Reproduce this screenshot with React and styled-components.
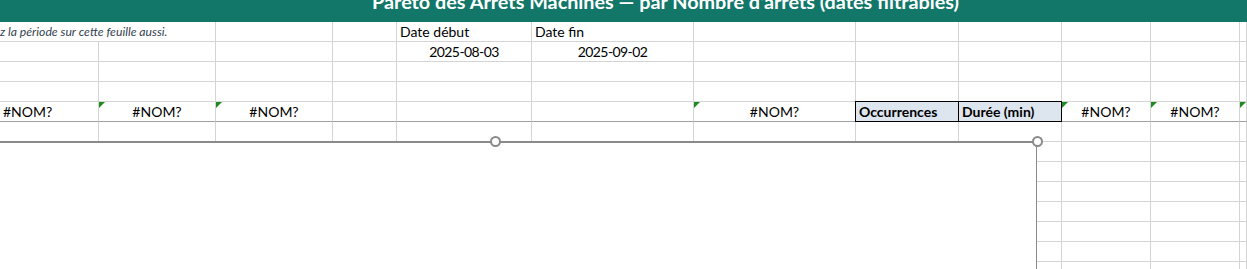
import React from 'react';
import styled, { createGlobalStyle } from 'styled-components';

const GlobalStyle = createGlobalStyle`
  html, body {
    margin: 0;
    padding: 0;
    background: #ffffff;
    overflow: hidden;
  }
`;

const COLS = '99px 117px 117px 64px 135px 162px 162px 103px 103px 89px 89px 1fr';

const title = "Pareto des Arrêts Machines — par Nombre d'arrêts (dates filtrables)";

// each row: list of cells { text, align, italic, bold, marker, head, span, num }
const rows = [
  [
    { text: 'z la période sur cette feuille aussi.', italic: true, span: 2, align: 'left' },
    {}, {}, { text: 'Date début', align: 'left' }, { text: 'Date fin', align: 'left' },
    {}, {}, {}, {}, {}, {},
  ],
  [
    {}, {}, {}, {},
    { text: '2025-08-03', align: 'center', num: true },
    { text: '2025-09-02', align: 'center', num: true },
    {}, {}, {}, {}, {}, {},
  ],
  Array.from({ length: 12 }, () => ({})),
  Array.from({ length: 12 }, () => ({})),
  [
    { text: '#NOM?', align: 'left', total: true },
    { text: '#NOM?', align: 'center', marker: true, total: true },
    { text: '#NOM?', align: 'center', marker: true, total: true },
    { total: true }, { total: true }, { total: true },
    { text: '#NOM?', align: 'center', marker: true, total: true },
    { text: 'Occurrences', head: true, total: true },
    { text: 'Durée (min)', head: true, total: true },
    { text: '#NOM?', align: 'center', marker: true, total: true },
    { text: '#NOM?', align: 'center', marker: true, total: true },
    { marker: true, total: true },
  ],
  ...Array.from({ length: 8 }, () => Array.from({ length: 12 }, () => ({}))),
];

const App = () => {
  return (
    <>
      <GlobalStyle />
      <Sheet>
        <TitleBar>
          <Title>{title}</Title>
        </TitleBar>
        <Grid>
          {rows.map((row, r) =>
            row.map((c, i) => (
              <Cell
                key={`${r}-${i}`}
                $span={c.span}
                $align={c.align}
                $head={c.head}
                $total={c.total}
              >
                {c.marker && <Marker />}
                {c.text && (
                  <CellText $italic={c.italic} $head={c.head} $num={c.num}>
                    {c.text}
                  </CellText>
                )}
              </Cell>
            ))
          )}
        </Grid>
        {/* floating chart object over the sheet */}
        <Chart>
          <Handle $x={505} />
          <Handle $x={1047} />
        </Chart>
      </Sheet>
    </>
  );
};

export default App;

const Sheet = styled.div`
  position: relative;
  width: 1247px;
  height: 269px;
  overflow: hidden;
  font-family: Lato, 'Liberation Sans', sans-serif;
  color: #000;
`;

const TitleBar = styled.div`
  height: 22px;
  background: #127769;
  display: flex;
  justify-content: center;
  padding-left: 84px;
  overflow: hidden;
`;

const Title = styled.div`
  color: #ffffff;
  font-weight: 700;
  font-size: 19.8px;
  line-height: 20px;
  margin-top: -9px;
  white-space: nowrap;
`;

const Grid = styled.div`
  display: grid;
  grid-template-columns: ${COLS};
  grid-auto-rows: 20px;
`;

const Cell = styled.div`
  position: relative;
  box-sizing: border-box;
  grid-column: span ${(p) => p.$span || 1};
  border-right: 1px solid ${(p) => (p.$head ? '#000' : '#d4d4d4')};
  border-bottom: 1px solid ${(p) => (p.$head ? '#000' : p.$total ? '#a0a0a0' : '#d4d4d4')};
  background: ${(p) => (p.$head ? '#dde5ef' : '#fff')};
  display: flex;
  align-items: flex-end;
  justify-content: ${(p) => (p.$align === 'center' ? 'center' : 'flex-start')};
  padding: 0 3px 1px;
  white-space: nowrap;
  ${(p) => p.$head && `
    border-top: 1px solid #000;
    margin-top: -1px;
    border-left: 1px solid #000;
    margin-left: -1px;
  `}
`;

const CellText = styled.span`
  font-size: ${(p) => (p.$italic ? '12.2px' : '14px')};
  font-style: ${(p) => (p.$italic ? 'italic' : 'normal')};
  font-weight: ${(p) => (p.$head ? 700 : 400)};
  letter-spacing: ${(p) => (p.$num ? '-0.6px' : '0')};
  color: ${(p) => (p.$italic ? '#333f4f' : '#000')};
  line-height: 16px;
  margin-left: ${(p) => (p.$italic ? '-3px' : '0')};
`;

const Marker = styled.span`
  position: absolute;
  left: 0;
  top: 0;
  width: 0;
  height: 0;
  border-top: 6px solid #1f8a1f;
  border-right: 6px solid transparent;
`;

const Chart = styled.div`
  position: absolute;
  left: -10px;
  top: 141px;
  width: 1047px;
  height: 200px;
  box-sizing: border-box;
  background: #ffffff;
  border-top: 2px solid #8a8a8a;
  border-right: 1px solid #8a8a8a;
`;

const Handle = styled.div`
  position: absolute;
  top: -7px;
  left: ${(p) => p.$x - 5}px;
  width: 11px;
  height: 11px;
  box-sizing: border-box;
  border-radius: 50%;
  border: 2px solid #8a8a8a;
  background: #ffffff;
`;
